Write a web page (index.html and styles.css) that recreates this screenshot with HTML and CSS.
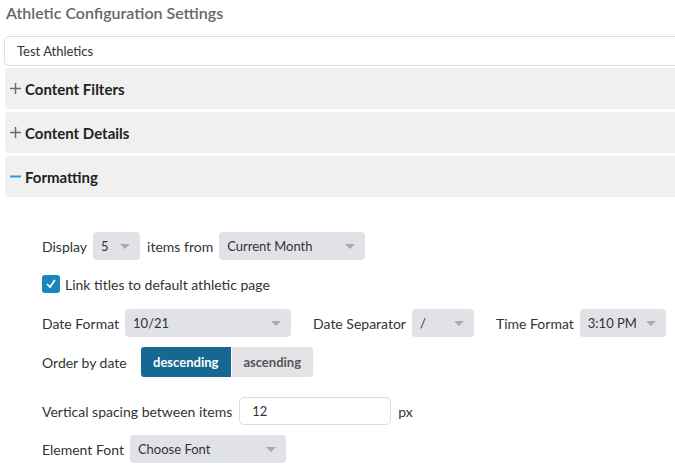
FILE: index.html
```html
<!DOCTYPE html>
<html>
<head>
<meta charset="utf-8">
<link rel="stylesheet" href="styles.css">
</head>
<body>
<div class="page">
  <h1 class="title">Athletic Configuration Settings</h1>
  <div class="name-input">Test Athletics</div>

  <div class="panel">
    <svg class="ico" width="11" height="11" viewBox="0 0 11 11"><path d="M0 5.5H11M5.5 0V11" stroke="#6b6b6b" stroke-width="1.5"/></svg>
    <span>Content Filters</span>
  </div>
  <div class="panel">
    <svg class="ico" width="11" height="11" viewBox="0 0 11 11"><path d="M0 5.5H11M5.5 0V11" stroke="#6b6b6b" stroke-width="1.5"/></svg>
    <span>Content Details</span>
  </div>
  <div class="panel">
    <svg class="ico" width="11" height="11" viewBox="0 0 11 11"><path d="M0 5.5H11" stroke="#2a9ad6" stroke-width="2"/></svg>
    <span>Formatting</span>
  </div>

  <div class="form">
    <div class="row r1">
      <span class="lbl">Display</span>
      <div class="sel w47">5<i class="arr"></i></div>
      <span class="lbl">items from</span>
      <div class="sel w146">Current Month<i class="arr"></i></div>
    </div>
    <div class="row r2">
      <span class="check"><svg width="12" height="12" viewBox="0 0 12 12"><path d="M2.5 6.5L5 9.2L9.5 2.5" fill="none" stroke="#fff" stroke-width="1.7" stroke-linecap="round" stroke-linejoin="round"/></svg></span>
      <span class="lbl">Link titles to default athletic page</span>
    </div>
    <div class="row r3">
      <span class="lbl">Date Format</span>
      <div class="sel w166">10/21<i class="arr"></i></div>
      <span class="lbl sp">Date Separator</span>
      <div class="sel w62">/<i class="arr"></i></div>
      <span class="lbl sp">Time Format</span>
      <div class="sel w86">3:10 PM<i class="arr"></i></div>
    </div>
    <div class="row r4">
      <span class="lbl">Order by date</span>
      <div class="btn-group">
        <span class="btn active">descending</span>
        <span class="btn">ascending</span>
      </div>
    </div>
    <div class="row r5">
      <span class="lbl">Vertical spacing between items</span>
      <div class="num">12</div>
      <span class="lbl">px</span>
    </div>
    <div class="row r6">
      <span class="lbl">Element Font</span>
      <div class="sel w156">Choose Font<i class="arr"></i></div>
    </div>
  </div>
</div>
</body>
</html>
```

FILE: styles.css
```css
html, body {
  margin: 0;
  padding: 0;
  background: #fff;
  overflow: hidden;
}
body {
  font-family: Lato, "Open Sans", "Liberation Sans", sans-serif;
  color: #333;
  width: 675px;
  height: 469px;
}
.page {
  width: 720px;
  padding-left: 5px;
}
.title {
  margin: 3px 0 0 1px;
  font-size: 16px;
  line-height: 20px;
  font-weight: 600;
  color: #666;
}
.name-input {
  margin: 13px 0 0 -1px;
  height: 28px;
  border: 1px solid #dedee2;
  border-radius: 5px;
  padding-left: 12px;
  font-size: 13px;
  line-height: 28px;
  color: #333;
}
.panel {
  margin-top: 2px;
  height: 41px;
  background: #f0f0f0;
  border-radius: 3px;
  display: flex;
  align-items: center;
  padding-left: 5px;
  font-size: 15px;
  font-weight: 700;
  color: #222;
}
.panel + .panel { margin-top: 3px; }
.ico { margin-right: 4px; margin-top: 0; }
.form {
  padding: 35px 0 0 37px;
}
.row {
  display: flex;
  align-items: center;
  font-size: 14px;
  color: #333;
}
.lbl { white-space: nowrap; }
.r1 { height: 28px; gap: 6px; }
.r1 .sel:first-of-type { margin-right: 1px; }
.r2 { margin-top: 15px; height: 18px; gap: 5px; }
.r3 { margin-top: 16px; height: 28px; gap: 6px; }
.r3 .sp { margin-left: 16px; }
.r4 { margin-top: 10px; height: 30px; gap: 14px; }
.r5 { margin-top: 20px; height: 28px; gap: 7px; }
.r6 { margin-top: 10px; height: 28px; gap: 6px; }
.sel {
  position: relative;
  height: 28px;
  line-height: 28px;
  font-size: 13px;
  background: #e1e2e8;
  border-radius: 4px;
  padding-left: 8px;
  box-sizing: border-box;
  color: #333;
}
.arr {
  position: absolute;
  right: 10px;
  top: 12px;
  width: 0;
  height: 0;
  border-left: 5px solid transparent;
  border-right: 5px solid transparent;
  border-top: 5px solid #a9aab0;
}
.w47 { width: 47px; }
.w146 { width: 146px; }
.w166 { width: 166px; }
.w62 { width: 62px; }
.w86 { width: 86px; }
.w156 { width: 156px; }
.check {
  width: 18px;
  height: 18px;
  background: #1a86c0;
  border-radius: 3px;
  display: flex;
  align-items: center;
  justify-content: center;
}
.btn-group {
  display: flex;
  gap: 1px;
}
.btn {
  height: 30px;
  line-height: 30px;
  font-size: 13px;
  font-weight: 700;
  text-align: center;
  background: #e4e4e8;
  color: #555;
  width: 81px;
}
.btn.active {
  background: #156892;
  color: #fff;
  width: 90px;
  border-radius: 3px 0 0 3px;
}
.btn:last-child { border-radius: 0 3px 3px 0; }
.num {
  width: 152px;
  height: 28px;
  box-sizing: border-box;
  border: 1px solid #dcdce0;
  border-radius: 5px;
  padding-left: 12px;
  font-size: 13px;
  line-height: 26px;
  color: #333;
}
```
